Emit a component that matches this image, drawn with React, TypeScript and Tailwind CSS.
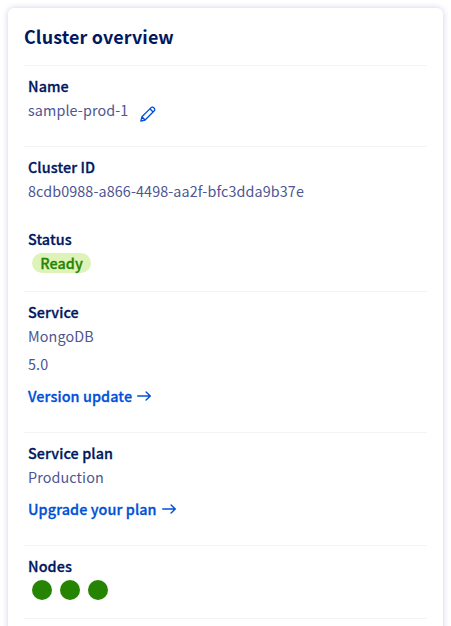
import type { ReactNode } from 'react';

function Section({ className, children }: { className: string; children: ReactNode }) {
  return <section className={`border-t border-[#f4f4f5] px-1 pt-2 ${className}`}>{children}</section>;
}

function Label({ children }: { children: ReactNode }) {
  return <h3 className="h-6 font-medium tracking-[0.1px] text-[#00185e] [-webkit-text-stroke:0.3px]">{children}</h3>;
}

function Value({ children }: { children: ReactNode }) {
  return <p className="h-6 tracking-[0.11px] text-[#4d5592]">{children}</p>;
}

function ActionLink({ children }: { children: ReactNode }) {
  return (
    <a href="#" className="mt-2 flex h-6 items-center gap-[5px] font-medium tracking-[0.1px] text-[#0050d7]">
      <span className="[-webkit-text-stroke:0.3px]">{children}</span>
      <svg className="h-3.5 w-3.5" viewBox="0 0 14 14" fill="none" stroke="currentColor" strokeWidth="1.4" strokeLinecap="round" strokeLinejoin="round">
        <path d="M.7 7h12.6M9.1 3l4.2 4-4.2 4" />
      </svg>
    </a>
  );
}

export default function App() {
  return (
    <main className="h-[626px] w-[451px] overflow-hidden bg-white px-2 pt-2 text-[14.35px] leading-6 [font-family:'Noto_Sans_CJK_SC',sans-serif]">
      <div className="h-[640px] w-[435px] rounded-md bg-white px-4 pt-3.5 shadow-[0_0_6px_rgba(0,14,156,0.2)]">
        <h2 className="h-[43px] text-[17.9px] leading-7 font-bold tracking-[0.13px] text-[#00185e]">Cluster overview</h2>
        <Section className="h-[81px]">
          <Label>Name</Label>
          <div className="flex items-start">
            <Value>sample-prod-1</Value>
            <svg className="mt-2 ml-3 h-4 w-4" viewBox="0 0 16 16" fill="none" stroke="#0050d7" strokeWidth="1.3" strokeLinecap="round" strokeLinejoin="round">
              <path d="M.8 15.2l1.1-4.4 9.2-9.2c1.7-1.7 4.9 1.5 3.2 3.2L5.1 14zM9.9 2.8l3.2 3.2M1.9 10.8l3.2 3.2" />
            </svg>
          </div>
        </Section>
        <Section className="h-[145px]">
          <Label>Cluster ID</Label>
          <Value>8cdb0988-a866-4498-aa2f-bfc3dda9b37e</Value>
          <div className="mt-6">
            <Label>Status</Label>
            <span className="mt-0.5 ml-1 flex h-5 w-[59px] items-center justify-center rounded-full bg-[#def3b8] font-medium tracking-[0.1px] text-[#268403] [-webkit-text-stroke:0.3px]">Ready</span>
          </div>
        </Section>
        <Section className="h-[141px]">
          <Label>Service</Label>
          <Value>MongoDB</Value>
          <div className="mt-1">
            <Value>5.0</Value>
          </div>
          <ActionLink>Version update</ActionLink>
        </Section>
        <Section className="h-[113px]">
          <Label>Service plan</Label>
          <Value>Production</Value>
          <ActionLink>Upgrade your plan</ActionLink>
        </Section>
        <Section className="h-[73px]">
          <Label>Nodes</Label>
          <div className="mt-0.5 ml-1 flex gap-2">
            <span className="h-5 w-5 rounded-full bg-[#268403]" />
            <span className="h-5 w-5 rounded-full bg-[#268403]" />
            <span className="h-5 w-5 rounded-full bg-[#268403]" />
          </div>
        </Section>
        <div className="border-t border-[#f4f4f5]" />
      </div>
    </main>
  );
}
